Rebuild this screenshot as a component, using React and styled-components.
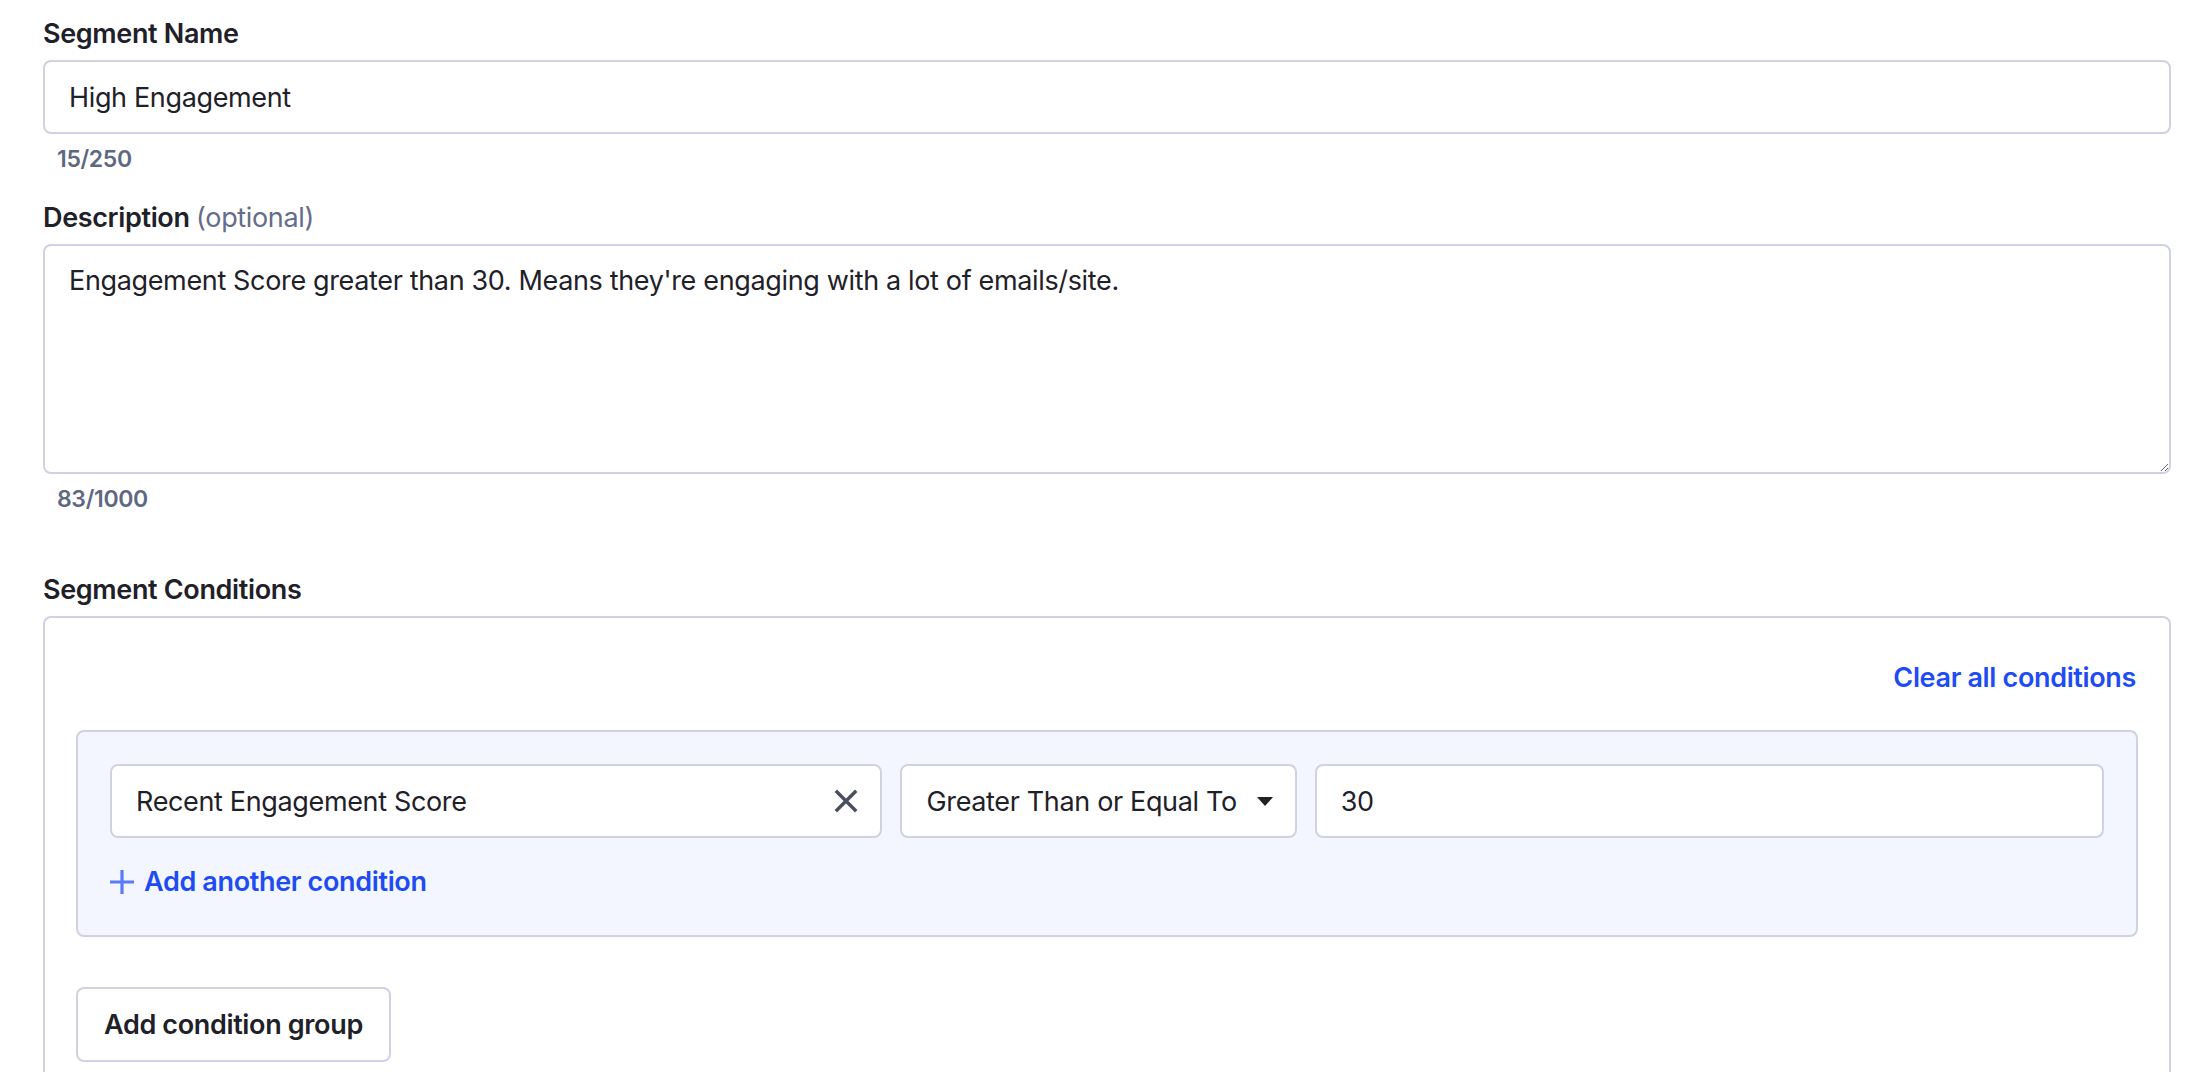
import React from 'react';
import styled, { createGlobalStyle } from 'styled-components';

const GlobalStyle = createGlobalStyle`
  * { box-sizing: border-box; }
  html, body {
    margin: 0;
    background: #fff;
    font-family: Inter, "Noto Sans", sans-serif;
    color: #1f2128;
    letter-spacing: -0.35px;
    overflow: hidden;
  }
  input, textarea, button { letter-spacing: inherit; }
`;

const Page = styled.main`
  padding: 14px 21px 0 43px;
`;

const Field = styled.div`
  display: flex;
  flex-direction: column;
  margin-bottom: ${p => p.$gap || 0}px;
`;

const Label = styled.label`
  font-size: 27px;
  line-height: 40px;
  font-weight: 600;
  color: #1f2128;
  margin-bottom: 6px;
`;

const Optional = styled.span`
  font-weight: 400;
  color: #646d8a;
`;

const TextInput = styled.input`
  height: 74px;
  width: 100%;
  border: 2px solid #cfd3e1;
  border-radius: 8px;
  padding: 0 24px;
  font-family: inherit;
  font-size: 27px;
  color: #1f2128;
  background: #fff;
  outline: none;
`;

const TextArea = styled.textarea`
  height: 230px;
  width: 100%;
  border: 2px solid #cfd3e1;
  border-radius: 8px;
  padding: 15px 24px;
  font-family: inherit;
  font-size: 27px;
  line-height: 40px;
  color: #1f2128;
  background: #fff;
  outline: none;
  resize: vertical;
  display: block;
`;

const Counter = styled.div`
  font-size: 23px;
  line-height: 34px;
  font-weight: 600;
  color: #5f6883;
  padding-left: 14px;
  margin-top: 8px;
`;

const ConditionsBox = styled.section`
  border: 2px solid #cfd3e1;
  border-radius: 8px;
  padding: 40px 31px 200px;
`;

const BoxHeader = styled.div`
  display: flex;
  justify-content: flex-end;
  padding-right: 2px;
  margin-bottom: 32px;
`;

const LinkButton = styled.button`
  display: inline-flex;
  align-items: center;
  gap: 10px;
  border: none;
  background: none;
  padding: 0;
  font-family: inherit;
  font-size: 27px;
  line-height: 40px;
  font-weight: 600;
  color: #1f4cf2;
  cursor: pointer;
`;

const Group = styled.div`
  background: #f3f6fe;
  border: 2px solid #cfd3e1;
  border-radius: 8px;
  padding: 32px 32px 33px;
`;

const ConditionRow = styled.div`
  display: flex;
  gap: 18px;
  margin-bottom: 24px;
`;

const Box = styled.div`
  flex: ${p => p.$grow || '0 0 auto'};
  height: 74px;
  display: flex;
  align-items: center;
  justify-content: space-between;
  gap: 20px;
  border: 2px solid #cfd3e1;
  border-radius: 8px;
  background: #fff;
  padding: 0 ${p => p.$right || 24}px 0 24px;
  font-size: 27px;
  color: #1f2128;
  white-space: nowrap;
`;

const IconButton = styled.span`
  display: inline-flex;
  color: #4a4f5e;
  cursor: pointer;
`;

const Secondary = styled.button`
  height: 75px;
  padding: 0 26px;
  border: 2px solid #cfd3e1;
  border-radius: 8px;
  background: #fff;
  font-family: inherit;
  font-size: 27px;
  font-weight: 600;
  color: #1f2128;
  margin-top: 50px;
  cursor: pointer;
`;

const CloseIcon = () => (
  <svg width="24" height="24" viewBox="0 0 24 24" fill="none" stroke="currentColor" strokeWidth="3.4" strokeLinecap="square">
    <path d="M3 3l18 18M21 3L3 21" />
  </svg>
);

const Caret = () => (
  <svg width="16" height="9" viewBox="0 0 16 9">
    <path d="M0 0h16L8 9z" fill="#1f2128" />
  </svg>
);

const PlusIcon = () => (
  <svg width="24" height="24" viewBox="0 0 24 24" stroke="#5a7bf7" strokeWidth="3.2">
    <path d="M12 0v24M0 12h24" />
  </svg>
);

export default function App() {
  const name = 'High Engagement';
  const desc = "Engagement Score greater than 30. Means they're engaging with a lot of emails/site.";
  return (
    <>
      <GlobalStyle />
      <Page>
        <Field $gap={22}>
          <Label>Segment Name</Label>
          <TextInput defaultValue={name} />
          <Counter>{name.length}/250</Counter>
        </Field>
        <Field $gap={54}>
          <Label>
            Description <Optional>(optional)</Optional>
          </Label>
          <TextArea defaultValue={desc} />
          <Counter>{desc.length}/1000</Counter>
        </Field>
        <Field>
          <Label>Segment Conditions</Label>
          <ConditionsBox>
            <BoxHeader>
              <LinkButton>Clear all conditions</LinkButton>
            </BoxHeader>
            <Group>
              <ConditionRow>
                <Box $grow="0.98 1 0" $right={22}>
                  Recent Engagement Score
                  <IconButton><CloseIcon /></IconButton>
                </Box>
                <Box $right={22}>
                  Greater Than or Equal To
                  <Caret />
                </Box>
                <Box $grow="1 1 0">30</Box>
              </ConditionRow>
              <LinkButton>
                <PlusIcon />
                Add another condition
              </LinkButton>
            </Group>
            <Secondary>Add condition group</Secondary>
          </ConditionsBox>
        </Field>
      </Page>
    </>
  );
}
